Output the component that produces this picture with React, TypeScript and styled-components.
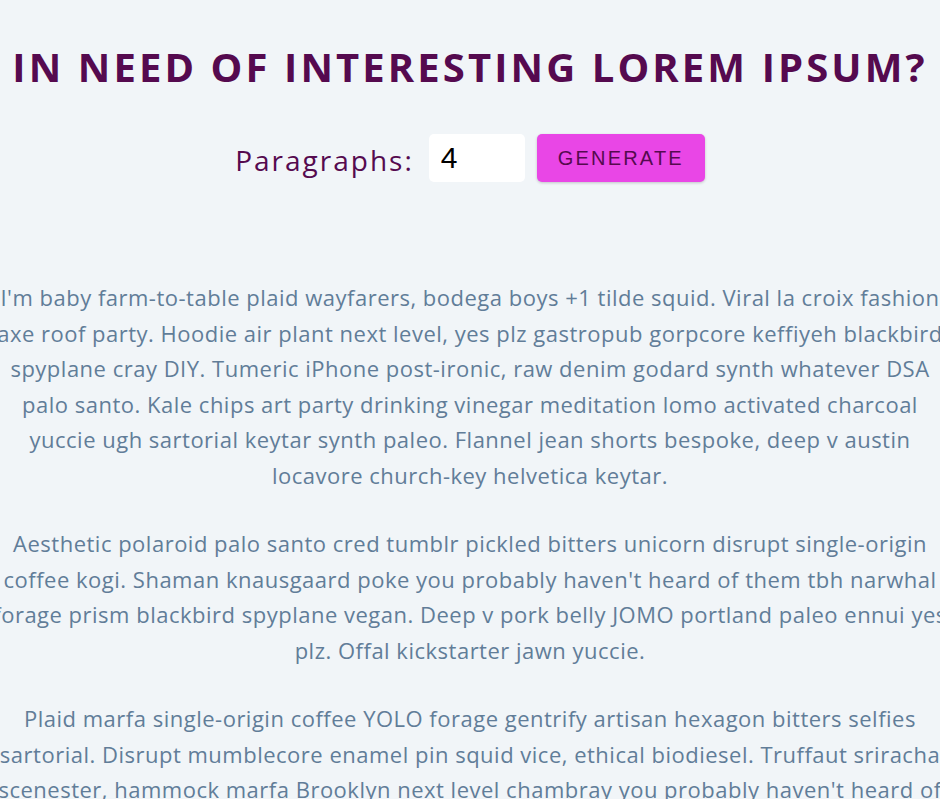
import React, { useState } from 'react';
import styled, { createGlobalStyle } from 'styled-components';

const paragraphs = [
    "I'm baby farm-to-table plaid wayfarers, bodega boys +1 tilde squid. Viral la croix fashion axe roof party. Hoodie air plant next level, yes plz gastropub gorpcore keffiyeh blackbird spyplane cray DIY. Tumeric iPhone post-ironic, raw denim godard synth whatever DSA palo santo. Kale chips art party drinking vinegar meditation lomo activated charcoal yuccie ugh sartorial keytar synth paleo. Flannel jean shorts bespoke, deep v austin locavore church-key helvetica keytar.",
    "Aesthetic polaroid palo santo cred tumblr pickled bitters unicorn disrupt single-origin coffee kogi. Shaman knausgaard poke you probably haven't heard of them tbh narwhal forage prism blackbird spyplane vegan. Deep v pork belly JOMO portland paleo ennui yes plz. Offal kickstarter jawn yuccie.",
    "Plaid marfa single-origin coffee YOLO forage gentrify artisan hexagon bitters selfies sartorial. Disrupt mumblecore enamel pin squid vice, ethical biodiesel. Truffaut sriracha scenester, hammock marfa Brooklyn next level chambray you probably haven't heard of them. Banjo lo-fi kale chips tumblr hot chicken, bicycle rights cloud bread.",
    "Cold-pressed retro wolf, thundercats fingerstache chia cornhole. Typewriter sustainable tousled celiac, kinfolk lumbersexual succulents messenger bag normcore chambray poutine.",
];

const GlobalStyle = createGlobalStyle`
    body {
        margin: 0;
        background: #f1f5f8;
        overflow-x: hidden;
    }
`;

const Page = styled.section`
    display: flex;
    flex-direction: column;
    align-items: center;
    padding-top: 41px;
`;

const Title = styled.h1`
    margin: 0;
    font-family: "Open Sans", sans-serif;
    font-size: 40px;
    font-weight: 700;
    line-height: 52px;
    letter-spacing: 3.1px;
    text-transform: uppercase;
    color: #550a4f;
    white-space: nowrap;
`;

const Form = styled.form`
    display: flex;
    align-items: center;
    margin-top: 41px;
`;

const Label = styled.label`
    font-family: "Open Sans", sans-serif;
    font-size: 28px;
    letter-spacing: 2px;
    color: #550a4f;
    margin-right: 15px;
    padding-top: 4px;
`;

const Input = styled.input`
    box-sizing: border-box;
    width: 96px;
    height: 48px;
    border: none;
    border-radius: 5px;
    background: #fff;
    padding: 0 12px;
    font-family: "Liberation Sans", Arial, sans-serif;
    font-size: 30px;
    color: #000;
    outline: none;
`;

const Button = styled.button`
    box-sizing: border-box;
    width: 168px;
    height: 48px;
    margin-left: 12px;
    border: none;
    border-radius: 5px;
    background: #e946e6;
    box-shadow: 0 1px 3px rgba(0, 0, 0, 0.2);
    font-family: "Liberation Sans", Arial, sans-serif;
    font-size: 20px;
    letter-spacing: 2.2px;
    color: #550a4f;
    text-transform: uppercase;
    cursor: pointer;
`;

const Article = styled.article`
    flex-shrink: 0;
    width: 955px;
    margin-top: 98px;
`;

const Paragraph = styled.p`
    margin: 0 0 33px;
    font-family: "Open Sans", sans-serif;
    font-size: 22px;
    letter-spacing: 0.5px;
    line-height: 35.5px;
    text-align: center;
    color: #617d98;
`;

const App = () => {
    const [count, setCount] = useState(4);

    return (
        <>
            <GlobalStyle />
            <Page>
                <Title>In need of interesting lorem ipsum?</Title>
                <Form onSubmit={e => e.preventDefault()}>
                    <Label htmlFor="amount">Paragraphs:</Label>
                    <Input id="amount" type="number" value={count} onChange={e => setCount(Number(e.target.value))} />
                    <Button type="submit">Generate</Button>
                </Form>
                <Article>
                    {paragraphs.slice(0, count).map((text, i) => (
                        <Paragraph key={i}>{text}</Paragraph>
                    ))}
                </Article>
            </Page>
        </>
    );
}

export default App;
